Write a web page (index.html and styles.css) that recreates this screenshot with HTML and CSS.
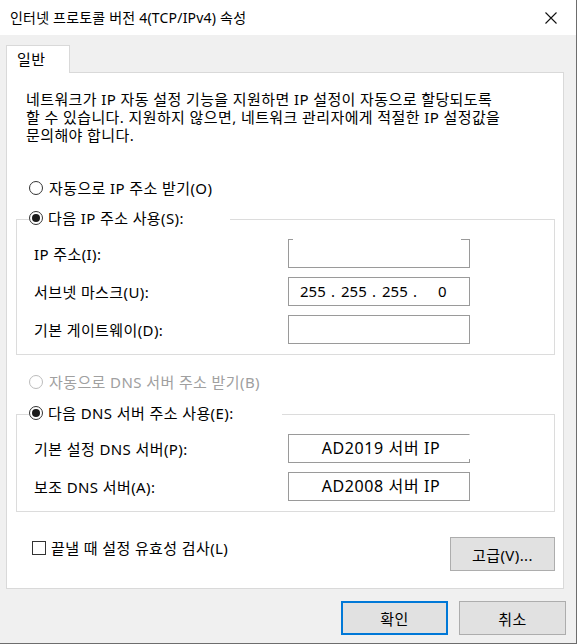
FILE: index.html
```html
<!DOCTYPE html>
<html lang="ko">
<head>
<meta charset="utf-8">
<title>인터넷 프로토콜 버전 4(TCP/IPv4) 속성</title>
<link rel="stylesheet" href="styles.css">
</head>
<body>
<div class="window">
  <div class="titlebar">
    <span class="title">인터넷 프로토콜 버전 4(TCP/IPv4) 속성</span>
    <span class="close"><svg width="12" height="12" viewBox="0 0 12 12"><path d="M0.5 0.5 L11.5 11.5 M11.5 0.5 L0.5 11.5" stroke="#111" stroke-width="1.1" fill="none"/></svg></span>
  </div>
  <div class="body">
    <div class="tabs"><div class="tab">일반</div></div>
    <div class="panel">
      <p class="desc">네트워크가 IP 자동 설정 기능을 지원하면 IP 설정이 자동으로 할당되도록<br>할 수 있습니다. 지원하지 않으면, 네트워크 관리자에게 적절한 IP 설정값을<br>문의해야 합니다.</p>
      <div class="option first-option"><span class="radio"></span><span>자동으로 IP 주소 받기(O)</span></div>
      <fieldset class="group group-ip">
        <legend class="legend legend-ip"><span class="radio checked"></span><span>다음 IP 주소 사용(S):</span></legend>
        <div class="field"><span class="label">IP 주소(I):</span><div class="input input-notop"></div></div>
        <div class="field"><span class="label">서브넷 마스크(U):</span><div class="input ip-text"><span class="octet">255</span><span class="dot">.</span><span class="octet">255</span><span class="dot">.</span><span class="octet">255</span><span class="dot">.</span><span class="octet octet-last">0</span></div></div>
        <div class="field"><span class="label">기본 게이트웨이(D):</span><div class="input"></div></div>
      </fieldset>
      <div class="option disabled dns-option"><span class="radio"></span><span>자동으로 DNS 서버 주소 받기(B)</span></div>
      <fieldset class="group group-dns">
        <legend class="legend legend-dns"><span class="radio checked"></span><span>다음 DNS 서버 주소 사용(E):</span></legend>
        <div class="field"><span class="label">기본 설정 DNS 서버(P):</span><div class="input dns-text input-noright">AD2019 서버 IP</div></div>
        <div class="field"><span class="label">보조 DNS 서버(A):</span><div class="input dns-text">AD2008 서버 IP</div></div>
      </fieldset>
      <div class="footer-row">
        <div class="check"><span class="checkbox"></span><span>끝낼 때 설정 유효성 검사(L)</span></div>
        <button class="btn">고급(V)...</button>
      </div>
    </div>
    <div class="actions">
      <button class="btn btn-default">확인</button>
      <button class="btn">취소</button>
    </div>
  </div>
</div>
</body>
</html>
```
FILE: styles.css
```css
* { box-sizing: border-box; }
html, body { margin: 0; padding: 0; }
body {
  font-family: "Noto Sans", "Noto Sans CJK KR", sans-serif;
  font-size: 15px;
  letter-spacing: 0.4px;
  color: #000;
  background: #f0f0f0;
}
.window {
  width: 577px;
  height: 644px;
  background: #f0f0f0;
  border-right: 1px solid #6d6d6d;
  border-bottom: 1px solid #6d6d6d;
}
.titlebar {
  height: 35px;
  background: #fff;
  display: flex;
  align-items: center;
  justify-content: space-between;
  padding: 0 19px 0 10px;
}
.title { font-size: 14px; line-height: 18px; letter-spacing: 0.2px; }
.close { display: flex; }
.body { padding: 10px 0 0 6px; }
.tabs { display: flex; }
.tab {
  width: 64px;
  height: 28px;
  background: #fff;
  border: 1px solid #d9d9d9;
  border-bottom: none;
  margin-bottom: -1px;
  position: relative;
  z-index: 1;
  padding: 4px 0 0 10px;
  line-height: 18px;
}
.panel {
  width: 558px;
  background: #fff;
  border: 1px solid #d9d9d9;
  padding: 17px 8px 17px 9px;
}
.desc {
  margin: 0 0 0 10px;
  line-height: 18px;
  white-space: nowrap;
}
.option {
  display: flex;
  align-items: center;
  gap: 6px;
  height: 18px;
  line-height: 18px;
  margin-left: 13px;
}
.first-option { margin-top: 35px; }
.dns-option { margin-top: 18px; }
.disabled { color: #a0a0a0; }
.radio {
  width: 14px;
  height: 14px;
  border: 1px solid #333;
  border-radius: 50%;
  background: #fff;
  display: flex;
  align-items: center;
  justify-content: center;
  flex: none;
}
.disabled .radio { border-color: #bcbcbc; }
.radio.checked::after {
  content: "";
  width: 8px;
  height: 8px;
  border-radius: 50%;
  background: #1a1a1a;
}
.group {
  margin: 12px 0 0 0;
  width: 100%;
  min-width: 0;
  border: 1px solid #dcdcdc;
  padding: 10px 0 10px 12px;
}
.group-dns { margin-top: 13px; }
.legend {
  display: flex;
  align-items: center;
  gap: 5px;
  height: 20px;
  line-height: 18px;
  padding: 0 0 2px 0;
}
.legend-ip { width: 201px; }
.legend-dns { width: 253px; }
.field {
  display: flex;
  align-items: center;
  height: 29px;
}
.field + .field { margin-top: 9px; }
.label {
  width: 259px;
  padding-left: 5px;
  line-height: 18px;
}
.input {
  width: 182px;
  height: 29px;
  border: 1px solid #9a9a9a;
  background: #fff;
  position: relative;
  line-height: 27px;
}
.input-notop { border-top-color: transparent; }
.input-notop::before,
.input-notop::after {
  content: "";
  position: absolute;
  top: -1px;
  height: 1px;
  background: #9a9a9a;
}
.input-notop::before { left: -1px; width: 5px; }
.input-notop::after { right: -1px; width: 9px; }
.input-noright { border-right-color: transparent; }
.input-noright::after {
  content: "";
  position: absolute;
  right: -1px;
  bottom: -1px;
  width: 1px;
  height: 4px;
  background: #9a9a9a;
}
.ip-text {
  display: flex;
  padding-left: 11px;
  letter-spacing: 0;
}
.octet { width: 26px; text-align: left; }
.dot { width: 15px; text-align: center; padding-right: 1px; }
.octet-last { padding-left: 15px; }
.dns-text {
  text-align: center;
  font-size: 16px;
  letter-spacing: 0.6px;
  padding-left: 4px;
}
.footer-row {
  display: flex;
  justify-content: space-between;
  align-items: flex-start;
  margin-top: 25px;
}
.check {
  display: flex;
  align-items: center;
  gap: 5px;
  line-height: 18px;
  margin: 2px 0 0 16px;
}
.checkbox {
  width: 14px;
  height: 14px;
  border: 1px solid #333;
  background: #fff;
  flex: none;
}
.btn {
  font-family: inherit;
  font-size: 15px;
  letter-spacing: 0.4px;
  color: #000;
  width: 105px;
  height: 34px;
  background: #e1e1e1;
  border: 1px solid #adadad;
  padding: 0;
  margin: 0;
}
.actions {
  display: flex;
  justify-content: flex-end;
  gap: 11px;
  padding-right: 10px;
  margin-top: 12px;
}
.actions .btn { width: 107px; }
.btn-default { border: 2px solid #0078d7; }
```
